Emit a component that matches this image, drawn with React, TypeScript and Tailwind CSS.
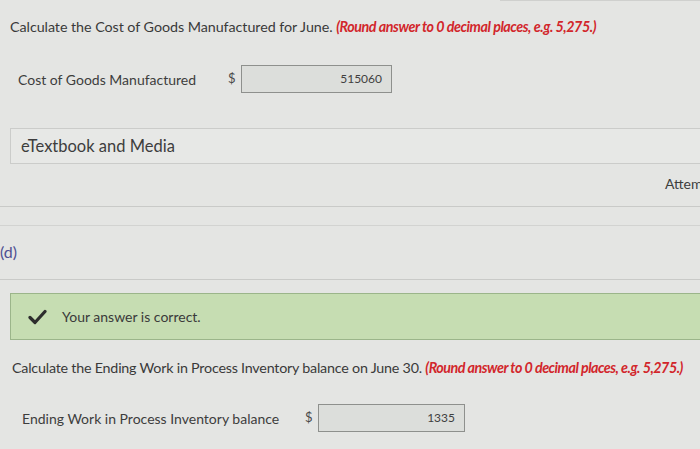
import React from 'react'

function AnswerRow({ label, labelWidth, value, inputWidth }: { label: string; labelWidth: string; value: string; inputWidth: string }) {
  return (
    <div className="flex items-center h-[28px]">
      <span className={`${labelWidth} text-[14px] text-[#3d3d3d] whitespace-nowrap`}>{label}</span>
      <span className="w-[13px] text-[13px] text-[#4a4a4a]">$</span>
      <div className={`${inputWidth} h-[28px] border border-[#8e908d] bg-[#dcdedb] flex items-center justify-end pr-[9px] text-[12px] text-[#3f3f3f]`}>
        {value}
      </div>
    </div>
  )
}

export default function App() {
  return (
    <div className="w-[700px] h-[449px] overflow-hidden bg-[#e4e5e3] font-['Lato','Liberation_Sans',sans-serif] text-[#3a3a3a]">
      <div className="ml-[500px] h-px bg-[#cfd0ce]" />

      <p className="mt-[16px] ml-[10px] text-[14.3px] leading-[20px] tracking-[-0.05px] whitespace-nowrap">
        Calculate the Cost of Goods Manufactured for June.{' '}
        <span className="font-bold italic text-[#d2262b] tracking-[-0.45px]">(Round answer to 0 decimal places, e.g. 5,275.)</span>
      </p>

      <div className="mt-[28px] ml-[18px]">
        <AnswerRow label="Cost of Goods Manufactured" labelWidth="w-[210px]" value="515060" inputWidth="w-[151px]" />
      </div>

      <div className="mt-[35px] ml-[10px] mr-[-10px] h-[36px] border border-[#cbccca] bg-[#e7e8e6] flex items-center pl-[10px] text-[16.5px] text-[#3d3d3d]">
        eTextbook and Media
      </div>

      <div className="mt-[10px] h-[20px] pl-[665px] whitespace-nowrap overflow-hidden text-[14px] leading-[20px] text-[#3d3d3d]">
        Attempts: 0 of 3 used
      </div>

      <div className="mt-[12px] h-px bg-[#c9cac8]" />
      <div className="mt-[18px] h-px bg-[#d2d3d1]" />

      <div className="mt-[16px] h-[20px] text-[16px] leading-[20px] text-[#4f4f92]">(d)</div>

      <div className="mt-[17px] h-px bg-[#c9cac8]" />

      <div className="mt-[13px] ml-[10px] mr-[-10px] h-[47px] border border-[#9bb58a] bg-[#c6ddb2] flex items-center pl-[17px]">
        <svg width="19" height="16" viewBox="0 0 19 16" className="mr-[15px]">
          <path d="M2 8.5 L7 13.5 L17 2.5" fill="none" stroke="#2d2d2d" strokeWidth="3.2" strokeLinecap="round" strokeLinejoin="round" />
        </svg>
        <span className="text-[14px] text-[#3a3a3a]">Your answer is correct.</span>
      </div>

      <p className="mt-[18px] ml-[12px] text-[14.3px] leading-[20px] tracking-[-0.22px] whitespace-nowrap">
        Calculate the Ending Work in Process Inventory balance on June 30.{' '}
        <span className="font-bold italic text-[#d2262b] tracking-[-0.5px]">(Round answer to 0 decimal places, e.g. 5,275.)</span>
      </p>

      <div className="mt-[26px] ml-[22px]">
        <AnswerRow label="Ending Work in Process Inventory balance" labelWidth="w-[283px]" value="1335" inputWidth="w-[147px]" />
      </div>
    </div>
  )
}
